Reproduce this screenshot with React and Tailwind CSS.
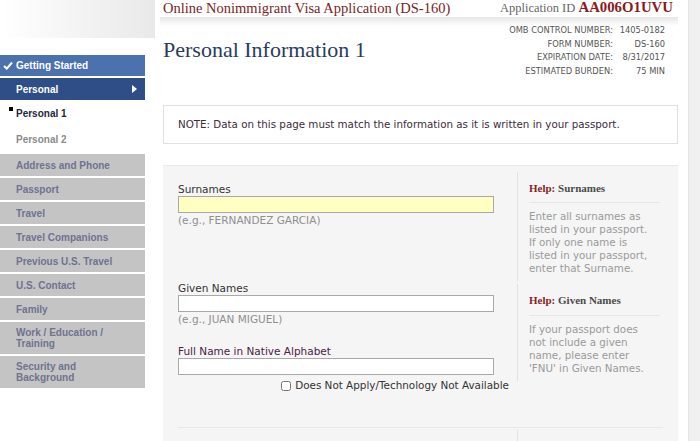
import React, { useState } from 'react';

const navGrey = [
  ['Address and Phone'],
  ['Passport'],
  ['Travel'],
  ['Travel Companions'],
  ['Previous U.S. Travel'],
  ['U.S. Contact'],
  ['Family'],
  ['Work / Education /', 'Training'],
  ['Security and', 'Background'],
];

const info = [
  ['OMB CONTROL NUMBER:', '1405-0182'],
  ['FORM NUMBER:', 'DS-160'],
  ['EXPIRATION DATE:', '8/31/2017'],
  ['ESTIMATED BURDEN:', '75 MIN'],
];

const verdana = "font-['DejaVu_Sans',Verdana,sans-serif]";
const times = "font-['Liberation_Serif','Times_New_Roman',serif]";

const Sidebar = () => (
  <aside className="w-[145px] shrink-0 font-['Liberation_Sans',Arial,sans-serif] text-[10px] font-bold">
    <div className="h-[38px] w-[155px] bg-gradient-to-r from-white to-[#e9e9e9]" />
    <div className="h-[17px]" />
    <div className="h-[21px] bg-[#4b72ae] text-white flex items-center pl-[3px] gap-[3px]">
      <svg width="10" height="9" viewBox="0 0 10 9">
        <path d="M1 5 L3.8 7.6 L9 1.5" fill="none" stroke="white" strokeWidth="2" />
      </svg>
      <span>Getting Started</span>
    </div>
    <div className="mt-[2px] h-[22px] bg-[#2f4e87] text-white flex items-center justify-between pl-[16px] pr-[8px]">
      <span>Personal</span>
      <svg width="5" height="8" viewBox="0 0 5 8">
        <path d="M0 0 L5 4 L0 8 Z" fill="white" />
      </svg>
    </div>
    <div className="h-[26px] flex items-center pl-[9px] text-[#22283a]">
      <span className="w-[4px] h-[4px] bg-black self-start mt-[7px] mr-[3px]" />
      <span>Personal 1</span>
    </div>
    <div className="h-[26px] flex items-center pl-[16px] text-[#8a8a8a]">Personal 2</div>
    <div className="flex flex-col gap-[2px] mt-[2px]">
      {navGrey.map((lines) => (
        <div
          key={lines[0]}
          className={`bg-[#c4c4c4] text-[#6e7390] pl-[16px] flex flex-col justify-center leading-[11px] ${lines.length > 1 ? 'h-[32px]' : 'h-[22px]'}`}
        >
          {lines.map((l) => <span key={l}>{l}</span>)}
        </div>
      ))}
    </div>
  </aside>
);

const HelpBox = ({ title, lines }) => (
  <div className="border-l border-[#e2e2e2] pl-[11px] pr-[18px]">
    <div className={`${times} text-[11px] font-bold pt-[8px] pb-[6px] border-b border-[#e6e6e6]`}>
      <span className="text-[#8b1f1f]">Help:</span> <span className="text-[#4a4a4a]">{title}</span>
    </div>
    <div className={`${verdana} text-[10.3px] leading-[13px] text-[#9a9a9a] pt-[7px] pb-[6px] whitespace-nowrap`}>
      {lines.map((l) => <div key={l}>{l}</div>)}
    </div>
  </div>
);

const Field = ({ label, example, yellow, labelColor }) => (
  <div>
    <div className={`${verdana} text-[10.5px] leading-[13px] ${labelColor || 'text-[#333]'}`}>{label}</div>
    <input
      className={`block w-[316px] h-[17px] border border-[#a9a9a9] outline-none ${yellow ? 'bg-[#ffffc2]' : 'bg-white'}`}
    />
    {example && (
      <div className={`${verdana} text-[10.5px] leading-[14px] text-[#8f8f8f]`}>{example}</div>
    )}
  </div>
);

export default function App() {
  const [na, setNa] = useState(false);
  return (
    <div className="w-[700px] h-[441px] overflow-hidden bg-white flex">
      <Sidebar />
      <main className="w-[515px] ml-[18px] shrink-0">
        <header className="flex justify-between items-end h-[17px] pr-[5px] whitespace-nowrap">
          <span className={`${times} text-[14.5px] leading-[17px] text-[#7a2424]`}>
            Online Nonimmigrant Visa Application (DS-160)
          </span>
          <span className={`${times} leading-[17px]`}>
            <span className="text-[12.5px] text-[#666]">Application ID </span>
            <span className="text-[14.8px] font-bold text-[#8a1b1b]">AA006O1UVU</span>
          </span>
        </header>
        <div className="h-[9px] -ml-[3px] bg-gradient-to-b from-[#e6e6e6] to-white" />
        <div className="flex justify-between">
          <h1 className={`${times} text-[22px] leading-[24px] text-[#293c5a] mt-[12px]`}>Personal Information 1</h1>
          <div className={`${verdana} text-[8.3px] leading-[13.7px] text-[#555] grid grid-cols-[auto_52px] mr-[13px] -mt-[2px] whitespace-nowrap`}>
            {info.map(([k, v]) => (
              <React.Fragment key={k}>
                <span className="text-right">{k}</span>
                <span className="text-right">{v}</span>
              </React.Fragment>
            ))}
          </div>
        </div>
        <div className={`mt-[26px] h-[39px] border border-[#e1e1e1] bg-white flex items-center pl-[14px] ${verdana} text-[10.3px] text-[#3b2b3d] whitespace-nowrap`}>
          NOTE: Data on this page must match the information as it is written in your passport.
        </div>
        <section className="mt-[21px] bg-[#f5f5f5] h-[280px] border-t border-[#eaeaea]">
          <div className="flex">
            <div className="w-[354px] shrink-0 pl-[15px] pt-[17px]">
              <Field label="Surnames" example="(e.g., FERNANDEZ GARCIA)" yellow />
              <div className="h-[55px]" />
              <Field label="Given Names" example="(e.g., JUAN MIGUEL)" />
              <div className="h-[19px]" />
              <Field label="Full Name in Native Alphabet" labelColor="text-[#4b2146]" />
              <label className={`flex items-center justify-end gap-[4px] w-[331px] mt-[3px] ${verdana} text-[10.4px] text-[#333] whitespace-nowrap`}>
                <input
                  type="checkbox"
                  checked={na}
                  onChange={(e) => setNa(e.target.checked)}
                  className="w-[10px] h-[10px] m-0 accent-[#888]"
                />
                <span>Does Not Apply/Technology Not Available</span>
              </label>
            </div>
            <div className="flex-1 pt-[6px]">
              <HelpBox
                title="Surnames"
                lines={[
                  'Enter all surnames as',
                  'listed in your passport.',
                  'If only one name is',
                  'listed in your passport,',
                  'enter that Surname.',
                ]}
              />
              <div className="h-[3px]" />
              <HelpBox
                title="Given Names"
                lines={[
                  'If your passport does',
                  'not include a given',
                  'name, please enter',
                  "'FNU' in Given Names.",
                ]}
              />
            </div>
          </div>
          <div className="mt-[34px] ml-[15px] mr-[15px] border-t border-[#e8e8e8] h-[14px] flex">
            <div className="w-[339px]" />
            <div className="border-l border-[#e2e2e2] mt-[2px]" />
          </div>
        </section>
      </main>
      <div className="w-[10px] shrink-0" />
      <div className="flex-1 bg-[#f0f0f0] border-l border-[#e4e4e4]" />
    </div>
  );
}
